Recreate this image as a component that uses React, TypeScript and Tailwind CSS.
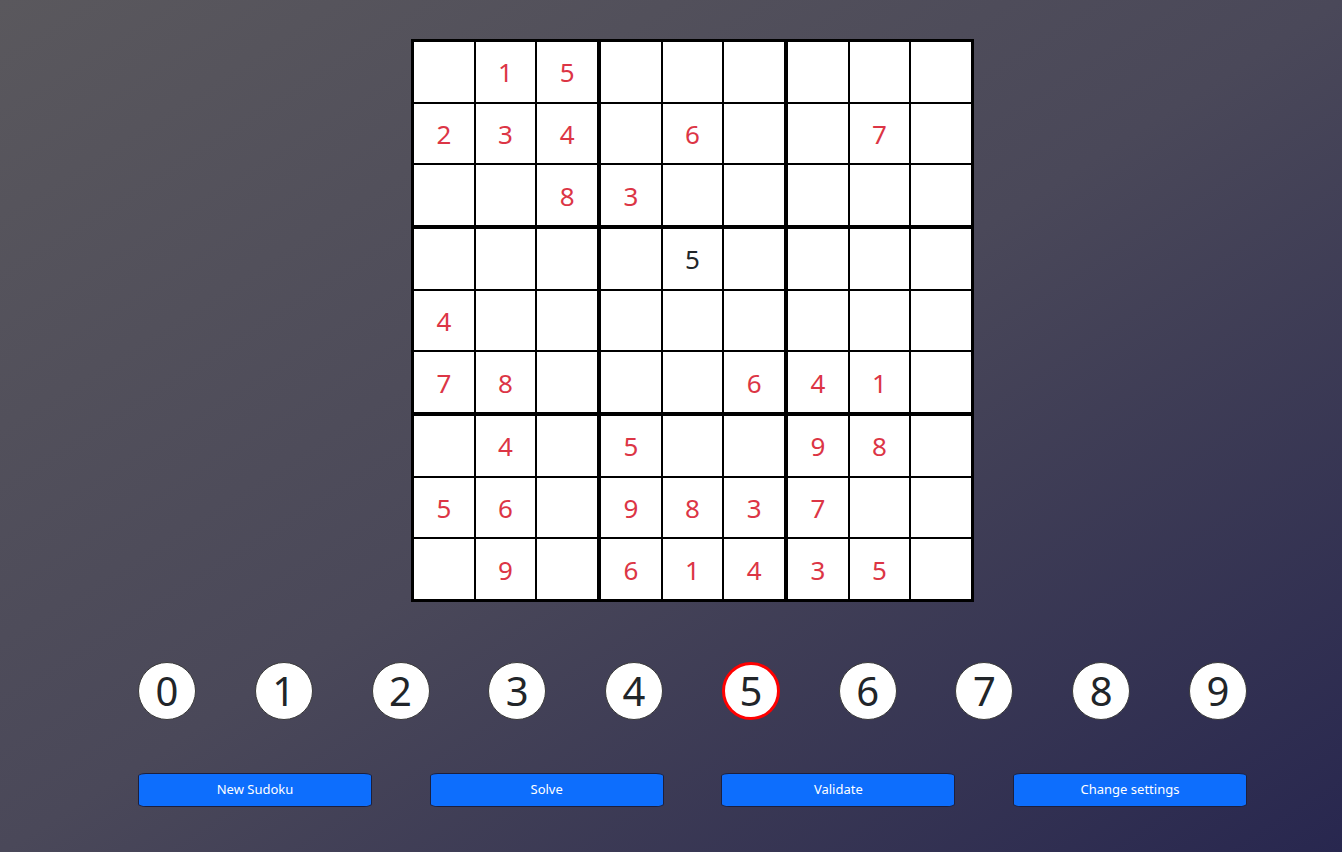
import React from "react";

const grid: (string | null)[][] = [
  [null, "1", "5", null, null, null, null, null, null],
  ["2", "3", "4", null, "6", null, null, "7", null],
  [null, null, "8", "3", null, null, null, null, null],
  [null, null, null, null, "5", null, null, null, null],
  ["4", null, null, null, null, null, null, null, null],
  ["7", "8", null, null, null, "6", "4", "1", null],
  [null, "4", null, "5", null, null, "9", "8", null],
  ["5", "6", null, "9", "8", "3", "7", null, null],
  [null, "9", null, "6", "1", "4", "3", "5", null],
];

const fixed = new Set(["3-4"]);

export default function App() {
  const boxes = [0, 1, 2, 3, 4, 5, 6, 7, 8];
  return (
    <div
      className="w-full h-[852px] overflow-hidden bg-[linear-gradient(to_bottom_right,#5a585d_0%,#4a4859_50%,#28274f_100%)] pl-[43px]"
      style={{ fontFamily: '"Segoe UI", "Noto Sans", "Open Sans", sans-serif' }}
    >
      <div className="mx-auto w-[1109px] flex flex-col items-center pt-[39px]">
        <div className="w-[563px] h-[563px] bg-black p-[3px] grid grid-cols-3 grid-rows-3 gap-[4px]">
          {boxes.map((b) => {
            const br = Math.floor(b / 3);
            const bc = b % 3;
            return (
              <div key={b} className="grid grid-cols-3 grid-rows-3 gap-[2px]">
                {[0, 1, 2, 3, 4, 5, 6, 7, 8].map((c) => {
                  const r = br * 3 + Math.floor(c / 3);
                  const col = bc * 3 + (c % 3);
                  const v = grid[r][col];
                  const isFixed = fixed.has(`${r}-${col}`);
                  return (
                    <div
                      key={c}
                      className={
                        isFixed
                          ? "bg-white flex items-center justify-center text-[26px] text-[#212529] pt-[2px]"
                          : "bg-white flex items-center justify-center text-[26px] text-[#dc3545] pt-[2px]"
                      }
                    >
                      {v}
                    </div>
                  );
                })}
              </div>
            );
          })}
        </div>

        <div className="w-full flex justify-between mt-[60px]">
          {[0, 1, 2, 3, 4, 5, 6, 7, 8, 9].map((n) =>
            n === 5 ? (
              <div
                key={n}
                className="w-[58px] h-[58px] rounded-full bg-white border-[3px] border-[#ff0000] flex items-center justify-center text-[40px] text-[#212529] leading-none"
              >
                {n}
              </div>
            ) : (
              <div
                key={n}
                className="w-[58px] h-[58px] rounded-full bg-white border border-[#3a3a3a] flex items-center justify-center text-[40px] text-[#212529] leading-none"
              >
                {n}
              </div>
            )
          )}
        </div>

        <div className="w-full flex justify-between mt-[53px]">
          {["New Sudoku", "Solve", "Validate", "Change settings"].map((t) => (
            <button
              key={t}
              className="w-[234px] h-[34px] bg-[#0d6efd] text-white text-[13px] border border-[#1c1f3d] rounded-[8px_/_3px] flex items-center justify-center"
            >
              {t}
            </button>
          ))}
        </div>
      </div>
    </div>
  );
}
